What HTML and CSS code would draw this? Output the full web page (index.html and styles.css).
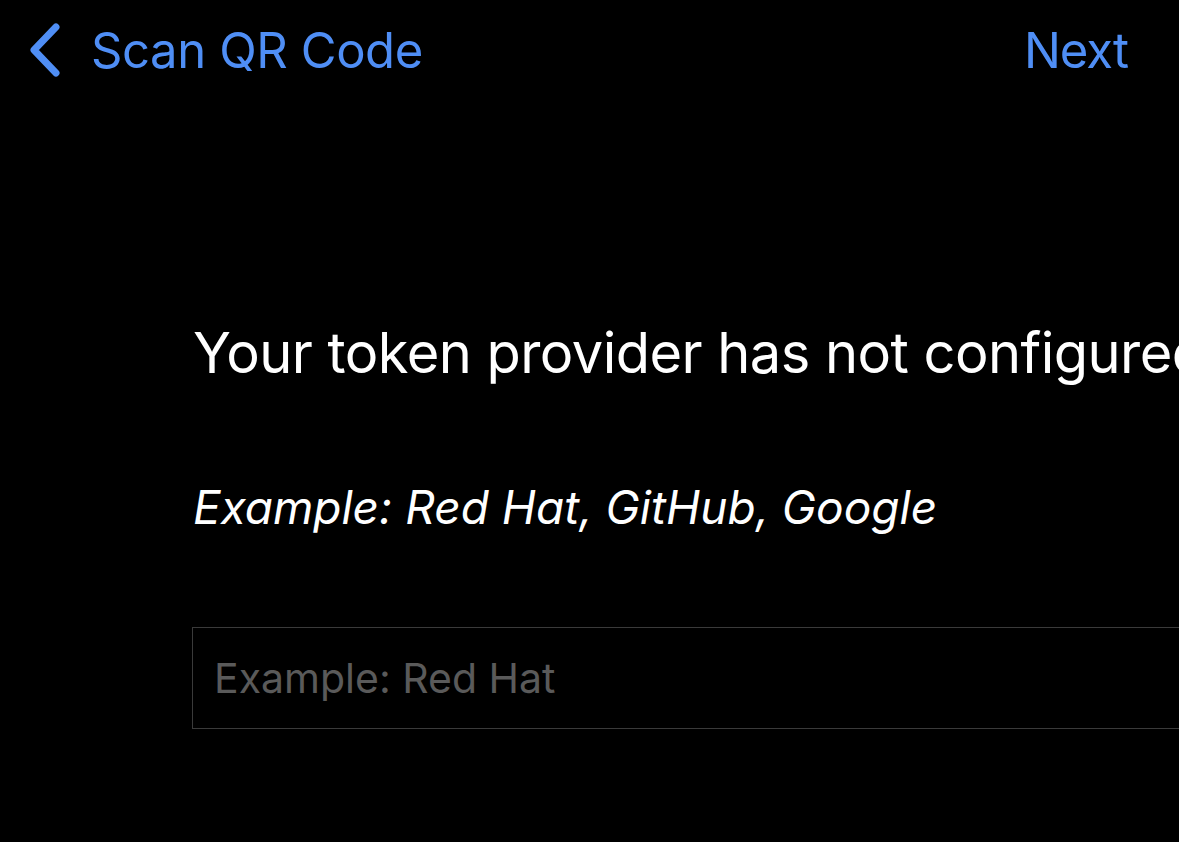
FILE: index.html
```html
<!DOCTYPE html>
<html lang="en">
<head>
<meta charset="utf-8">
<title>Scan QR Code</title>
<link rel="stylesheet" href="styles.css">
</head>
<body>
<div class="screen">
  <header class="nav">
    <a class="back" href="#">
      <svg class="chevron" width="36" height="58" viewBox="0 0 36 58" aria-hidden="true">
        <path d="M30 6 L8 29 L30 52" fill="none" stroke="#4f8ef5" stroke-width="7" stroke-linecap="round" stroke-linejoin="round"/>
      </svg>
      <span class="back-label">Scan QR Code</span>
    </a>
    <a class="next" href="#">Next</a>
  </header>
  <main class="content">
    <p class="heading">Your token provider has not configured an issuer name.</p>
    <p class="example">Example: Red Hat, GitHub, Google</p>
    <div class="field">
      <input class="input" type="text" placeholder="Example: Red Hat">
    </div>
  </main>
</div>
</body>
</html>
```
FILE: styles.css
```css
html, body {
  margin: 0;
  padding: 0;
  background: #000;
  overflow: hidden;
}
.screen {
  width: 1179px;
  height: 842px;
  overflow: hidden;
  font-family: Inter, "Noto Sans", sans-serif;
  color: #fff;
}
.nav {
  display: flex;
  align-items: center;
  justify-content: space-between;
  height: 100px;
  padding: 0 51px 0 26px;
}
.back {
  display: flex;
  align-items: center;
  gap: 29px;
  text-decoration: none;
  color: #4f8ef5;
}
.chevron {
  display: block;
}
.back-label, .next {
  font-size: 49px;
  line-height: 1;
  color: #4f8ef5;
  text-decoration: none;
  letter-spacing: -0.4px;
}
.next {
  letter-spacing: -1px;
}
.content {
  padding-left: 193px;
  padding-top: 218px;
}
.heading {
  margin: 0;
  font-size: 56px;
  line-height: 70px;
  white-space: nowrap;
  letter-spacing: -0.55px;
}
.example {
  margin: 91px 0 0;
  font-size: 46px;
  line-height: 56px;
  font-style: italic;
  white-space: nowrap;
  letter-spacing: 0;
}
.field {
  margin-top: 92px;
  width: 1100px;
  margin-left: -1px;
}
.input {
  display: block;
  box-sizing: border-box;
  width: 100%;
  height: 102px;
  border: 1px solid #3a3a3a;
  background: #000;
  padding: 0 0 0 21px;
  font-family: Inter, "Noto Sans", sans-serif;
  font-size: 41px;
  color: #fff;
  outline: none;
}
.input::placeholder {
  color: #5a5a5a;
}
```
